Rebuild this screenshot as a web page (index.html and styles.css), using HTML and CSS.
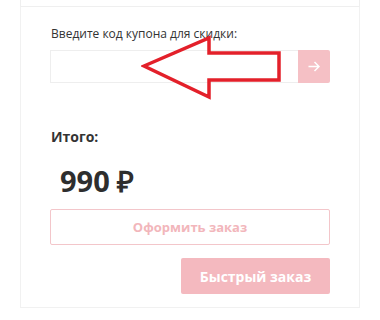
FILE: index.html
```html
<!DOCTYPE html>
<html>
<head>
<title>Корзина</title>
<link rel="stylesheet" href="styles.css">
</head>
<body>

<div class="prev-card"></div>

<div class="order-card">
  <div class="coupon">
    <div class="coupon-label">Введите код купона для скидки:</div>
    <div class="coupon-row">
      <input class="coupon-input" type="text">
      <button class="coupon-btn">
        <svg width="12" height="11" viewBox="0 0 12 11">
          <path d="M0.5 5.5H11M6.5 1L11 5.5 6.5 10" fill="none" stroke="#fff" stroke-width="1.5"/>
        </svg>
      </button>
    </div>
  </div>

  <div class="total-label">Итого:</div>
  <div class="total-sum">990 ₽</div>

  <button class="btn-checkout">Оформить заказ</button>
  <div class="quick-row">
    <button class="btn-quick">Быстрый заказ</button>
  </div>

  <!-- annotation arrow on top of the screenshot -->
  <svg class="hint-arrow" width="150" height="70" viewBox="0 0 150 70">
    <polygon points="3,31 68,3 68,18 138,18 138,45 68,45 68,62" fill="none" stroke="#e3202a" stroke-width="3.5" stroke-linejoin="miter"/>
  </svg>
</div>

</body>
</html>
```

FILE: styles.css
```css
body {
  margin: 0;
  background-color: #fff;
  font-family: "Open Sans", "Liberation Sans", sans-serif;
  color: #333;
}

.prev-card {
  margin-left: 20px;
  width: 338px;
  height: 6px;
  border: 1px solid #efefef;
  border-top: none;
}

.order-card {
  position: relative;
  margin-left: 20px;
  width: 280px;
  padding: 18px 29px 13px 29px;
  border: 1px solid #f1f1f1;
  border-top: none;
}

.coupon-label {
  font-size: 12px;
  line-height: 17px;
  margin-left: 1px;
}

.coupon-row {
  display: flex;
  margin-top: 8px;
  height: 33px;
}

.coupon-input {
  flex: 1;
  margin: 0;
  padding: 0 10px;
  border: 1px solid #eee;
  border-right: none;
  outline: none;
  font-family: inherit;
}

.coupon-btn {
  width: 32px;
  margin: 0;
  padding: 0;
  border: none;
  border-radius: 0 2px 2px 0;
  background-color: #f5c0c5;
  display: flex;
  justify-content: center;
  align-items: center;
}

.total-label {
  margin-top: 44px;
  margin-left: 1px;
  font-size: 14px;
  font-weight: bold;
  line-height: 20px;
}

.total-sum {
  margin-top: 17px;
  margin-left: 10px;
  font-size: 29px;
  font-weight: bold;
  line-height: 34px;
  color: #2e2e2e;
}

.btn-checkout {
  display: block;
  width: 100%;
  height: 36px;
  margin-top: 11px;
  border: 1px solid #f3c6ca;
  border-radius: 2px;
  background-color: #fff;
  color: #f2b6bb;
  font-family: inherit;
  font-size: 13px;
  font-weight: bold;
}

.quick-row {
  display: flex;
  justify-content: flex-end;
  margin-top: 13px;
}

.btn-quick {
  width: 149px;
  height: 36px;
  border: none;
  border-radius: 2px;
  background-color: #f4b9bf;
  color: #fff;
  font-family: inherit;
  font-size: 14px;
  font-weight: bold;
}

.hint-arrow {
  position: absolute;
  left: 120px;
  top: 28px;
}
```
